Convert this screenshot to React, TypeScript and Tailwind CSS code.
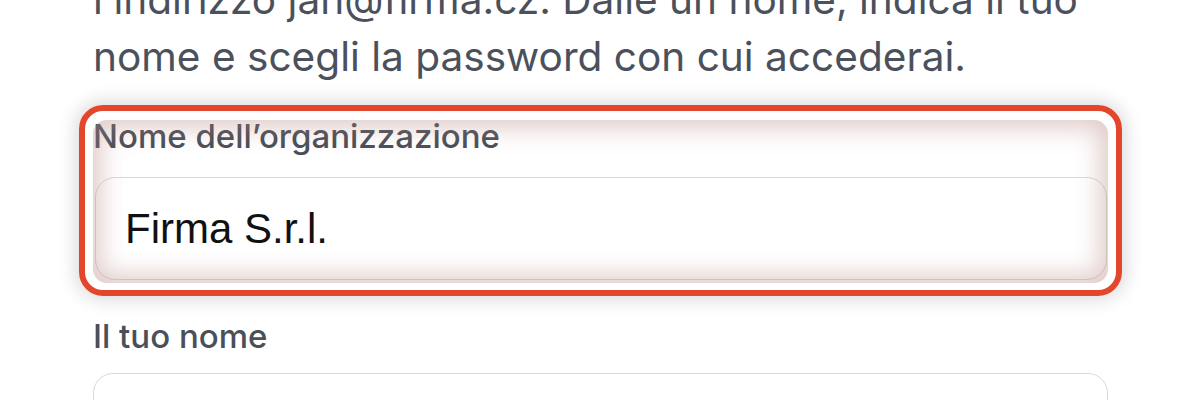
const Field = ({ label, value }: { label: string; value?: string }) => (
  <div className="flex flex-col">
    <label className="text-[33px] leading-[33px] font-medium text-[#4a4f5a]">{label}</label>
    <div className="mt-[24px] ml-[2px] mr-[1px] h-[103px] rounded-[20px] border border-[#d9d9d9] bg-white flex items-center pl-[29px] font-['Liberation_Sans',Arial,sans-serif] text-[42px] text-[#111111]">
      {value}
    </div>
  </div>
);

export default function App() {
  return (
    <div className="w-[1200px] h-[400px] overflow-hidden bg-white font-['Inter',sans-serif]">
      <div className="w-[1108px] pl-[93px] -mt-[29px]">
        {/* Intro */}
        <p className="text-[40.6px] leading-[57px] text-[#4b515c] whitespace-nowrap">
          l’indirizzo jan@firma.cz. Dalle un nome, indica il tuo
          <br />
          nome e scegli la password con cui accederai.
        </p>

        {/* Highlighted field */}
        <div className="relative mt-[35px] h-[163px]">
          <Field label="Nome dell’organizzazione" value="Firma S.r.l." />
          <div className="pointer-events-none absolute inset-0 rounded-[14px] shadow-[inset_0_0_24px_8px_rgba(180,130,125,0.42)]" />
          <div className="pointer-events-none absolute -left-[14px] -right-[14px] -top-[15px] -bottom-[13px] rounded-[24px] border-[6px] border-[#e2472c] shadow-[0_0_18px_4px_rgba(0,0,0,0.14)]" />
        </div>

        {/* Next field */}
        <div className="mt-[37px]">
          <label className="block text-[33px] leading-[33px] font-medium text-[#4a4f5a]">Il tuo nome</label>
          <div className="mt-[20px] h-[103px] rounded-[20px] border border-[#d9d9d9] bg-white" />
        </div>
      </div>
    </div>
  );
}
